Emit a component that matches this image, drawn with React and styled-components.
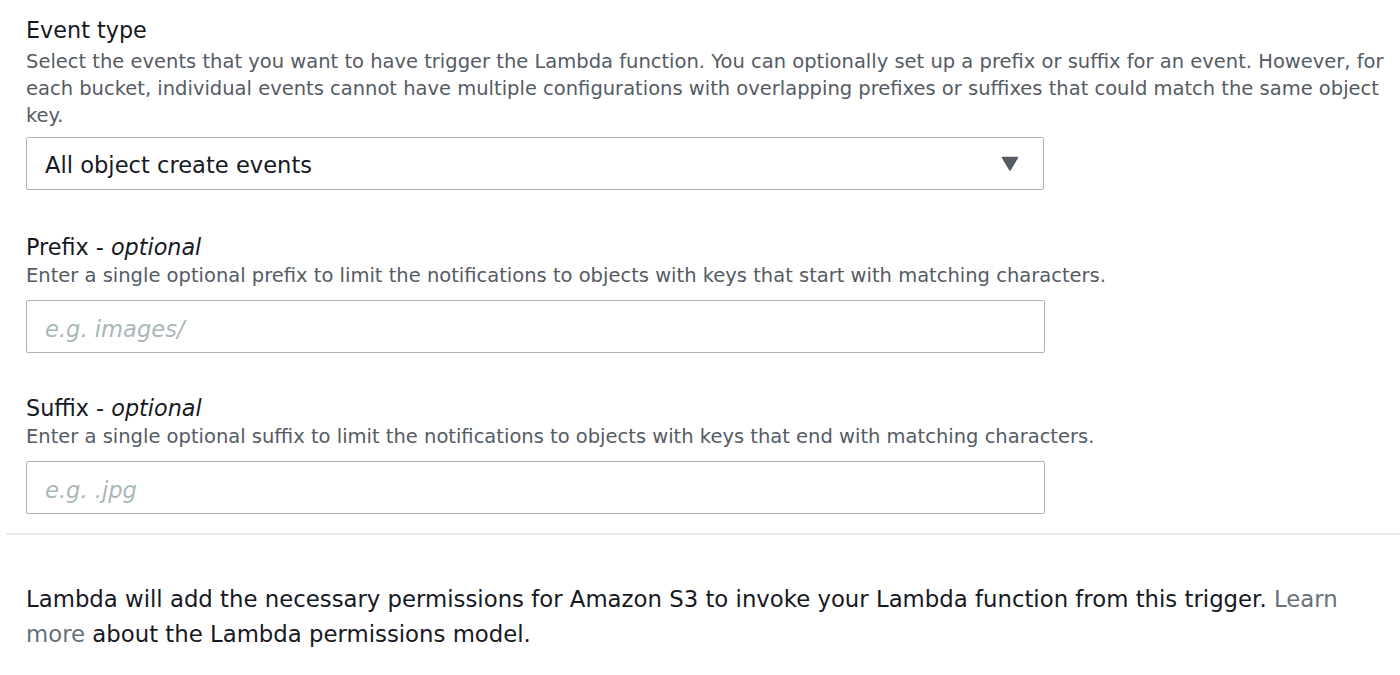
import React from "react";
import styled, { createGlobalStyle } from "styled-components";

const Global = createGlobalStyle`
  html, body { margin: 0; padding: 0; background: #ffffff; }
  body { font-family: "DejaVu Sans", "Open Sans", sans-serif; color: #16191f; }
  * { box-sizing: border-box; }
`;

const Page = styled.div`
  width: 1400px;
  height: 675px;
  overflow: hidden;
  padding-left: 6px;
`;

const Form = styled.div`
  padding: 15px 6px 0 20px;
  display: flex;
  flex-direction: column;
`;

const Field = styled.div`
  display: flex;
  flex-direction: column;
  margin-top: ${(p) => p.$top || 0}px;
`;

const Label = styled.div`
  font-size: 22.3px;
  line-height: 30px;
  color: #16191f;
  em { font-style: oblique; }
`;

const Description = styled.div`
  font-size: 19.5px;
  line-height: 27px;
  color: #545b64;
  margin-top: ${(p) => p.$top || 0}px;
`;

const SelectBox = styled.div`
  margin-top: 8px;
  width: 1018px;
  height: 53px;
  border: 1px solid #aab7b8;
  border-radius: 2px;
  display: flex;
  align-items: center;
  justify-content: space-between;
  padding: 2px 24px 0 18px;
  font-size: 22.6px;
  color: #16191f;
`;

const Caret = styled.svg`
  width: 18px;
  height: 15px;
  display: block;
  margin-top: -2px;
`;

const Input = styled.input`
  margin-top: 11px;
  width: 1019px;
  height: 53px;
  border: 1px solid #aab7b8;
  border-radius: 2px;
  padding: 4px 18px 0;
  font-family: inherit;
  font-size: 22.6px;
  color: #16191f;
  outline: none;
  &::placeholder {
    color: #aab7b8;
    font-style: oblique;
  }
`;

const Divider = styled.hr`
  margin: 19px 0 0 0;
  border: none;
  border-top: 2px solid #eaeded;
  width: 100%;
`;

const Note = styled.p`
  margin: 47px 0 0 20px;
  font-size: 22.8px;
  line-height: 35px;
  color: #16191f;
  max-width: 1345px;
`;

const Link = styled.a`
  color: #687078;
  text-decoration: none;
`;

export default function App() {
  return (
    <Page>
      <Global />
      <Form>
        <Field>
          <Label>Event type</Label>
          <Description $top={3}>
            Select the events that you want to have trigger the Lambda function. You can optionally set up a prefix or suffix for an event. However, for each bucket, individual events cannot have multiple configurations with overlapping prefixes or suffixes that could match the same object key.
          </Description>
          <SelectBox>
            <span>All object create events</span>
            <Caret viewBox="0 0 18 15">
              <path d="M1.5 1.5 L16.5 1.5 L9 14 Z" fill="#545b64" stroke="#545b64" strokeWidth="1.5" strokeLinejoin="round" />
            </Caret>
          </SelectBox>
        </Field>
        <Field $top={42}>
          <Label>
            Prefix - <em>optional</em>
          </Label>
          <Description>
            Enter a single optional prefix to limit the notifications to objects with keys that start with matching characters.
          </Description>
          <Input placeholder="e.g. images/" />
        </Field>
        <Field $top={40}>
          <Label>
            Suffix - <em>optional</em>
          </Label>
          <Description>
            Enter a single optional suffix to limit the notifications to objects with keys that end with matching characters.
          </Description>
          <Input placeholder="e.g. .jpg" />
        </Field>
      </Form>
      <Divider />
      <Note>
        Lambda will add the necessary permissions for Amazon S3 to invoke your Lambda function from this trigger. <Link href="#">Learn more</Link> about the Lambda permissions model.
      </Note>
    </Page>
  );
}
